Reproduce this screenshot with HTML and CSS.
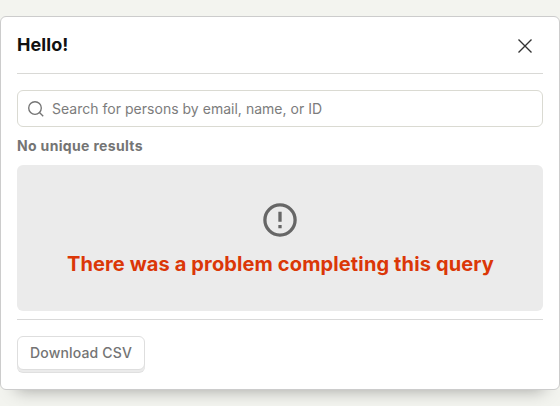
FILE: index.html
```html
<!DOCTYPE html>
<html lang="en">
<head>
<meta charset="utf-8">
<title>Hello!</title>
<link rel="stylesheet" href="styles.css">
</head>
<body>
<div class="modal">
  <header class="modal-header">
    <h3>Hello!</h3>
    <svg class="close" viewBox="0 0 20 20"><path d="M3.5 3.5l13 13M16.5 3.5l-13 13"/></svg>
  </header>
  <section class="modal-content">
    <label class="search">
      <svg viewBox="0 0 18 18"><circle cx="8" cy="8" r="6.3"/><path d="M12.5 12.5l3.7 3.7"/></svg>
      <span>Search for persons by email, name, or ID</span>
    </label>
    <div class="summary">No unique results</div>
    <div class="error">
      <svg viewBox="0 0 40 40"><circle cx="20" cy="20" r="15.1"/><path d="M20 11.7v10M20 25v3.3"/></svg>
      <h2>There was a problem completing this query</h2>
    </div>
  </section>
  <footer class="modal-footer"><button class="button">Download CSV</button></footer>
</div>
</body>
</html>
```
FILE: styles.css
```css
* { box-sizing: border-box; }
body {
  margin: 0;
  padding-top: 16px;
  height: 406px;
  overflow: hidden;
  background: #f3f4ef;
  font: 14px/20px Inter, sans-serif;
  color: #111;
}
.modal {
  width: 560px;
  height: 374px;
  background: #fff;
  border: 1px solid #ccc;
  border-radius: 6px;
  box-shadow: 0 16px 16px -16px rgba(0, 0, 0, .35);
}
.modal-header {
  display: flex;
  justify-content: space-between;
  align-items: center;
  height: 57px;
  margin: 0 16px;
  border-bottom: 1px solid #d9d9d6;
}
.modal-header h3 { margin: 0; font-size: 18px; font-weight: 700; letter-spacing: .05px; }
.close { width: 20px; height: 20px; margin: 2px 8px 0 0; fill: none; stroke: #333; stroke-width: 1.35; }
.modal-content { padding: 16px 16px 8px; }
.search {
  display: flex;
  align-items: center;
  gap: 7px;
  height: 37px;
  padding: 0 8px 0 9px;
  border: 1px solid #dadad2;
  border-radius: 6px;
  color: #7c7c7c;
  letter-spacing: .02px;
}
.search svg { width: 18px; height: 18px; fill: none; stroke: #747474; stroke-width: 1.35; }
.summary { margin: 9px 0; font-weight: 700; letter-spacing: .34px; color: #747474; }
.error {
  display: flex;
  flex-direction: column;
  align-items: center;
  height: 146px;
  padding-top: 35px;
  border-radius: 6px;
  background: #ebebeb;
}
.error svg { width: 40px; height: 40px; fill: none; stroke: #666; stroke-width: 3.3; }
.error h2 { margin: 10px 0 0; padding-left: 1px; font-size: 20px; line-height: 28px; font-weight: 700; letter-spacing: .13px; color: #db3707; }
.modal-footer { margin: 0 16px; padding-top: 16px; border-top: 1px solid #d9d9d9; }
.button {
  display: block;
  width: 128px;
  height: 34px;
  padding: 0 0 0 12px;
  text-align: left;
  border: 1px solid #dedede;
  border-radius: 6px;
  background: #fff;
  box-shadow: 0 2px #ebebeb, 0 3px #e0e0e0;
  font: 500 14px/20px Inter, sans-serif;
  letter-spacing: .16px;
  color: #747474;
}
```
